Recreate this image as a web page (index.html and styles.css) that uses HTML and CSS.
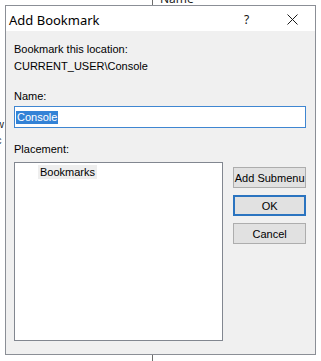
FILE: index.html
```html
<!DOCTYPE html>
<html lang="en">
<head>
  <meta charset="UTF-8">
  <title>Add Bookmark</title>
  <link rel="stylesheet" href="styles.css">
</head>
<body>
  <!-- window behind the dialog -->
  <div class="behind">
    <div class="col-line top"></div>
    <span class="col-head">Name</span>
    <div class="col-line bottom"></div>
    <span class="frag frag-w">w</span>
    <span class="frag frag-c">c</span>
  </div>

  <div class="dialog">
    <div class="titlebar">
      <span class="title">Add Bookmark</span>
      <span class="help">?</span>
      <span class="close">
        <svg width="11" height="11" viewBox="0 0 11 11">
          <path d="M0.5 0.5L10.5 10.5M10.5 0.5L0.5 10.5" stroke="#1a1a1a" stroke-width="1" fill="none"/>
        </svg>
      </span>
    </div>

    <div class="content">
      <div class="label">Bookmark this location:</div>
      <div class="label path">CURRENT_USER\Console</div>

      <div class="label name-label">Name:</div>
      <div class="textbox"><span class="sel">Console</span></div>

      <div class="label place-label">Placement:</div>
      <div class="place-row">
        <div class="listbox">
          <div class="item">Bookmarks</div>
        </div>
        <div class="buttons">
          <button class="btn">Add Submenu</button>
          <button class="btn default">OK</button>
          <button class="btn">Cancel</button>
        </div>
      </div>
    </div>
  </div>
</body>
</html>
```

FILE: styles.css
```css
body{
  margin:0; width:321px; height:361px; overflow:hidden;
  position:relative; background:#fff;
  font-family:"Liberation Sans",Arial,sans-serif; font-size:11px; color:#000;
}

/* background window bits */
.behind{position:absolute; inset:0;}
.col-line{position:absolute; left:152px; width:1px; background:#6d6d6d;}
.col-line.top{top:0; height:5px;}
.col-line.bottom{top:354px; height:7px;}
.col-head{
  position:absolute; left:160px; top:-9px;
  font-family:"Noto Sans",sans-serif; font-size:12px; line-height:16px; color:#222;
}
.frag{position:absolute; left:-4px; font-size:11px; line-height:13px; color:#222;}
.frag-w{top:118px;}
.frag-c{top:134px;}

/* dialog */
.dialog{
  position:absolute; left:5px; top:5px;
  width:311px; height:350px; box-sizing:border-box;
  border:1px solid #8b8f96; background:#f0f0f0;
  display:flex; flex-direction:column;
}
.titlebar{
  height:25px; background:#fff;
  display:flex; align-items:center; padding-left:3px;
}
.title{
  font-family:"Noto Sans",sans-serif; font-size:13px; color:#000; flex:1;
  position:relative; top:1px;
}
.help{
  font-family:"Noto Sans",sans-serif; font-size:12px; color:#111;
  width:12px; margin-right:31px; position:relative; top:1px;
}
.close{width:11px; height:11px; margin-right:17px; display:flex; position:relative; top:1px;}

.content{padding:12px 9px 0 8px;}
.label{line-height:13px;}
.path{margin-top:4px;}
.name-label{margin-top:17px;}
.textbox{
  margin-top:3px; height:22px; box-sizing:border-box;
  border:1px solid #3f86d1; background:#fff;
  display:flex; align-items:center; padding-left:1px;
}
.sel{
  background:#3382d6; color:#fff; line-height:13px; padding:0 1px 0 1px;
}
.place-label{margin-top:15px;}
.place-row{display:flex; margin-top:6px;}
.listbox{
  width:210px; height:179px; box-sizing:border-box;
  border:1px solid #828790; background:#fff; padding:2px 0 0 23px;
}
.item{
  display:inline-block; background:#eeeeee; padding:0 2px; line-height:14px;
}
.buttons{
  display:flex; flex-direction:column; gap:7px;
  margin-left:10px; margin-top:5px; width:73px;
}
.btn{
  height:21px; box-sizing:border-box; padding:0;
  border:1px solid #adadad; background:#e1e1e1;
  font-family:"Liberation Sans",Arial,sans-serif; font-size:11px; color:#000;
}
.btn.default{border:2px solid #2b74c0;}
```
